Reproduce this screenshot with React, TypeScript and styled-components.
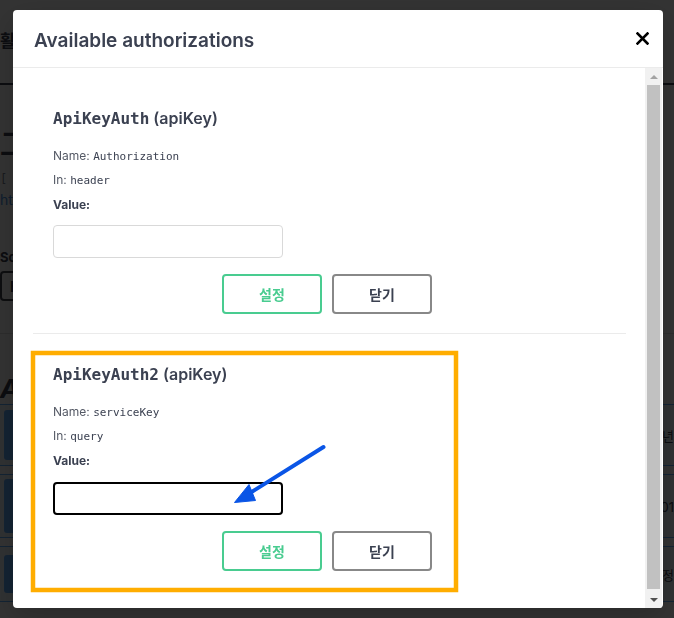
import React from "react";
import styled, { createGlobalStyle } from "styled-components";

const Global = createGlobalStyle`
  html, body { margin: 0; padding: 0; }
  body { font-family: Inter, "Noto Sans CJK KR", sans-serif; background: #fff; overflow: hidden; }
  * { box-sizing: border-box; }
`;

const SANS = `Inter, "Noto Sans CJK KR", sans-serif`;
const MONO = `"DejaVu Sans Mono", "Liberation Mono", monospace`;

/* ---------- background page (dimmed) ---------- */
const Page = styled.div`
  width: 674px;
  height: 618px;
  overflow: hidden;
  color: #3b4151;
  font-family: ${SANS};
`;
const TopNav = styled.div`
  height: 85px;
  border-bottom: 2px solid #3b4151;
  display: flex;
  align-items: center;
  padding-bottom: 4px;
  font-size: 17px;
  font-weight: 700;
  white-space: nowrap;
`;
const InfoBlock = styled.div`
  padding-top: 42px;
  display: flex;
  flex-direction: column;
`;
const BigTitle = styled.div`
  font-size: 30px;
  font-weight: 700;
  line-height: 34px;
  white-space: nowrap;
`;
const BaseUrl = styled.div`
  margin-top: 10px;
  font-size: 12px;
  line-height: 16px;
  color: #7d8492;
  font-family: ${MONO};
  white-space: nowrap;
`;
const Link = styled.div`
  margin-top: 4px;
  font-size: 14px;
  line-height: 18px;
  color: #4990e2;
  white-space: nowrap;
`;
const SchemeLabel = styled.div`
  margin-top: 40px;
  font-size: 13px;
  font-weight: 700;
  line-height: 16px;
`;
const SchemeSelect = styled.div`
  margin-top: 6px;
  width: 120px;
  height: 30px;
  border: 2px solid #41444e;
  border-radius: 4px;
  display: flex;
  align-items: center;
  padding-left: 8px;
  font-size: 14px;
  font-weight: 700;
`;
const SchemeRule = styled.div`
  margin-top: 32px;
  height: 1px;
  background: #e0e0e0;
`;
const SectionTitle = styled.div`
  margin-top: 40px;
  font-size: 26px;
  font-weight: 700;
  font-style: italic;
  line-height: 30px;
`;
const OpList = styled.div`
  display: flex;
  flex-direction: column;
  gap: 8px;
`;
const OpBlock = styled.div<{ $h: number }>`
  height: ${(p) => p.$h}px;
  border-top: 1px solid #61affe;
  border-bottom: 1px solid #61affe;
  background: rgba(97, 175, 254, 0.1);
  display: flex;
  align-items: center;
  padding: 0 0 0 4px;
`;
const Method = styled.div<{ $h: number }>`
  width: 60px;
  height: ${(p) => p.$h}px;
  border-radius: 3px;
  background: #61affe;
`;
const OpSummary = styled.div`
  flex: 1;
  text-align: right;
  font-size: 13px;
  white-space: nowrap;
  color: #3b4151;
`;

/* ---------- overlay & modal ---------- */
const Backdrop = styled.div`
  position: fixed;
  inset: 0;
  background: rgba(0, 0, 0, 0.8);
`;
const ModalLayer = styled.div`
  position: fixed;
  inset: 0;
  display: flex;
  justify-content: center;
  align-items: flex-start;
  padding: 10px 0 0 2px;
`;
const Modal = styled.div`
  width: 650px;
  background: #fff;
  border-radius: 4px;
  box-shadow: 0 10px 30px 0 rgba(0, 0, 0, 0.2);
  overflow: hidden;
  display: flex;
  flex-direction: column;
`;
const Header = styled.div`
  height: 58px;
  border-bottom: 1px solid #ebebeb;
  display: flex;
  align-items: center;
  justify-content: space-between;
  padding: 3px 13px 0 21px;
`;
const Title = styled.h3`
  margin: 0;
  font-family: ${SANS};
  font-size: 19px;
  font-weight: 600;
  color: #3b4151;
`;
const CloseBtn = styled.button`
  border: none;
  background: none;
  padding: 0;
  margin-top: -3px;
  width: 16px;
  height: 16px;
  display: flex;
  align-items: center;
  justify-content: center;
  cursor: pointer;
`;
const BodyRow = styled.div`
  height: 540px;
  display: flex;
  padding-right: 1px;
`;
const Body = styled.div`
  flex: 1;
  overflow: hidden;
  padding: 20px 0 20px 20px;
`;
const ScrollRail = styled.div`
  width: 17px;
  background: #f1f1f1;
  display: flex;
  flex-direction: column;
  align-items: stretch;
`;
const ScrollArrow = styled.div`
  height: 17px;
  display: flex;
  align-items: center;
  justify-content: center;
`;
const ScrollThumb = styled.div`
  flex: 1;
  margin: 0 2px 2px;
  background: #c1c1c1;
`;
const AuthContainer = styled.div<{ $last?: boolean }>`
  width: 593px;
  padding: 10px 20px;
  margin-bottom: 10px;
  border-bottom: ${(p) => (p.$last ? "none" : "1px solid #ebebeb")};
  display: flex;
  flex-direction: column;
  align-items: flex-start;
`;
const AuthTitle = styled.h4`
  margin: 10px 0 0;
  height: 20px;
  font-family: ${SANS};
  font-size: 16px;
  font-weight: 600;
  line-height: 20px;
  color: #3b4151;
  white-space: nowrap;
`;
const Code = styled.code`
  font-family: ${MONO};
  font-weight: 700;
  font-size: 16px;
  line-height: 20px;
`;
const InfoLine = styled.p<{ $mt: number }>`
  margin: ${(p) => p.$mt}px 0 0;
  height: 14px;
  font-family: ${SANS};
  font-size: 12px;
  line-height: 14px;
  color: #555a66;
  white-space: nowrap;
`;
const SmallCode = styled.code`
  font-family: ${MONO};
  font-size: 11px;
  line-height: 14px;
  color: #3b4151;
`;
const ValueLabel = styled.label`
  margin-top: 11px;
  height: 14px;
  font-family: ${SANS};
  font-size: 12px;
  line-height: 14px;
  font-weight: 700;
  color: #3b4151;
`;
const ValueInput = styled.input<{ $focused?: boolean }>`
  margin-top: ${(p) => (p.$focused ? 14 : 13)}px;
  width: 230px;
  height: 33px;
  border: ${(p) => (p.$focused ? "2px solid #000" : "1px solid #d9d9d9")};
  border-radius: 4px;
  background: #fff;
  outline: none;
  padding: 0 10px;
`;
const BtnRow = styled.div`
  align-self: stretch;
  margin: 16px 0 9px;
  padding-right: 5px;
  display: flex;
  justify-content: center;
  gap: 10px;
`;
const Btn = styled.button<{ $variant: "auth" | "close" }>`
  width: 100px;
  height: 40px;
  border-radius: 4px;
  background: transparent;
  border: 2px solid ${(p) => (p.$variant === "auth" ? "#49cc90" : "#888")};
  color: ${(p) => (p.$variant === "auth" ? "#49cc90" : "#3b4151")};
  font-family: "Noto Sans CJK KR", sans-serif;
  font-size: 14px;
  font-weight: 700;
  cursor: pointer;
  padding: 0;
`;

/* ---------- annotation layer ---------- */
const Annotation = styled.svg`
  position: fixed;
  left: 0;
  top: 0;
  pointer-events: none;
`;

type Auth = { name: string; keyName: string; inWhere: string; focused?: boolean };
const auths: Auth[] = [
  { name: "ApiKeyAuth", keyName: "Authorization", inWhere: "header" },
  { name: "ApiKeyAuth2", keyName: "serviceKey", inWhere: "query", focused: true },
];

function CloseIcon() {
  return (
    <svg width="13" height="13" viewBox="0 0 13 13">
      <path d="M1.5 1.5 L11.5 11.5 M11.5 1.5 L1.5 11.5" stroke="#000" strokeWidth="2.6" strokeLinecap="square" />
    </svg>
  );
}

function Arrow({ up }: { up?: boolean }) {
  return (
    <svg width="8" height="4" viewBox="0 0 8 4">
      <polygon points={up ? "0,4 4,0 8,4" : "0,0 8,0 4,4"} fill={up ? "#a3a3a3" : "#505050"} />
    </svg>
  );
}

export default function App() {
  return (
    <>
      <Global />
      <Page>
        <TopNav>활용신청 상세기능정보</TopNav>
        <InfoBlock>
          <BigTitle>그 식품의약품안전처 의약품 정보</BigTitle>
          <BaseUrl>[ Base URL: apis.data.go.kr/1471000 ]</BaseUrl>
          <Link>https://apis.data.go.kr/1471000/openapi.json</Link>
          <SchemeLabel>Schemes</SchemeLabel>
          <SchemeSelect>HTTPS</SchemeSelect>
          <SchemeRule />
        </InfoBlock>
        <SectionTitle>API 목록</SectionTitle>
        <OpList>
          <OpBlock $h={62}>
            <Method $h={50} />
            <OpSummary>마약류 취급 보고 현황 조회 (최근 5년</OpSummary>
          </OpBlock>
          <OpBlock $h={64}>
            <Method $h={54} />
            <OpSummary>의약품 허가 정보 조회 2001</OpSummary>
          </OpBlock>
          <OpBlock $h={56}>
            <Method $h={38} />
            <OpSummary>마약류 향정</OpSummary>
          </OpBlock>
        </OpList>
      </Page>
      <Backdrop />
      <ModalLayer>
        <Modal>
          <Header>
            <Title>Available authorizations</Title>
            <CloseBtn aria-label="close">
              <CloseIcon />
            </CloseBtn>
          </Header>
          <BodyRow>
            <Body>
              {auths.map((a, i) => (
                <AuthContainer key={a.name} $last={i === auths.length - 1}>
                  <AuthTitle>
                    <Code>{a.name}</Code>&nbsp;(apiKey)
                  </AuthTitle>
                  <InfoLine $mt={21}>
                    Name: <SmallCode>{a.keyName}</SmallCode>
                  </InfoLine>
                  <InfoLine $mt={10}>
                    In: <SmallCode>{a.inWhere}</SmallCode>
                  </InfoLine>
                  <ValueLabel>Value:</ValueLabel>
                  <ValueInput type="text" $focused={a.focused} />
                  <BtnRow>
                    <Btn $variant="auth">설정</Btn>
                    <Btn $variant="close">닫기</Btn>
                  </BtnRow>
                </AuthContainer>
              ))}
            </Body>
            <ScrollRail>
              <ScrollArrow>
                <Arrow up />
              </ScrollArrow>
              <ScrollThumb />
              <ScrollArrow>
                <Arrow />
              </ScrollArrow>
            </ScrollRail>
          </BodyRow>
        </Modal>
      </ModalLayer>
      <Annotation width="674" height="618" viewBox="0 0 674 618">
        <rect x="33" y="353" width="423" height="237" fill="none" stroke="#ffad00" strokeWidth="4.5" />
        <line x1="323.5" y1="447" x2="250" y2="493" stroke="#0a55e6" strokeWidth="4" strokeLinecap="round" />
        <polygon points="234.5,502.5 249,484.5 255.5,500.5" fill="#0a55e6" stroke="#0a55e6" strokeWidth="1" strokeLinejoin="round" />
      </Annotation>
    </>
  );
}
